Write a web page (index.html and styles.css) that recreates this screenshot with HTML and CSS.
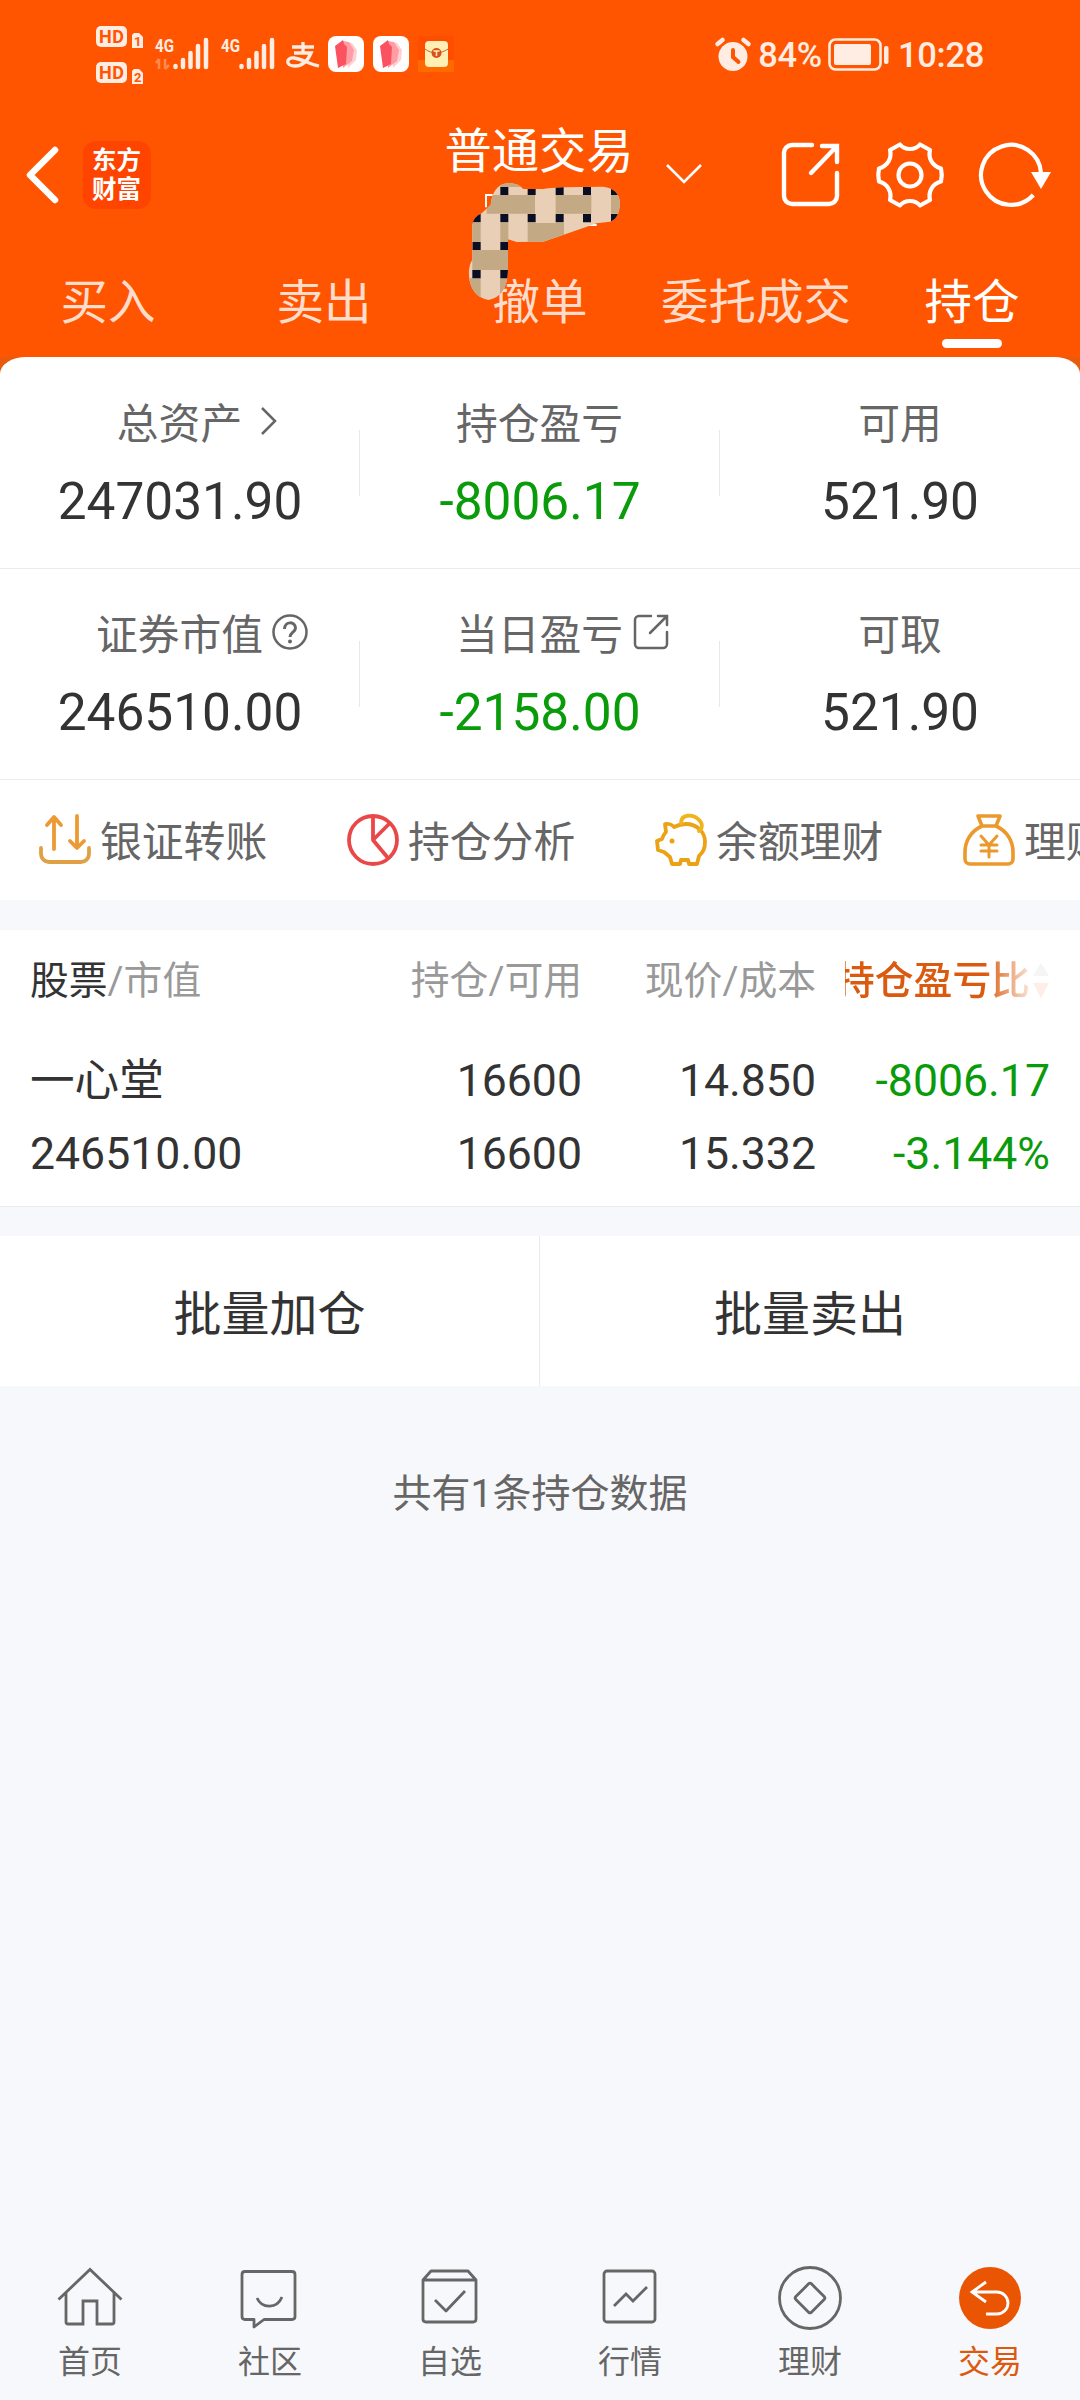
FILE: index.html
```html
<!DOCTYPE html>
<html lang="zh-CN">
<head>
  <meta charset="UTF-8">
  <title>普通交易 - 持仓</title>
  <link rel="stylesheet" href="styles.css">
</head>
<body>

  <header class="header">
    <div class="status-bar">
      <svg class="hd" width="48" height="60" viewBox="0 0 48 60">
        <g fill="#ffece2">
          <rect x="0" y="0" width="31" height="21" rx="5"/>
          <rect x="0" y="36" width="31" height="21" rx="5"/>
          <path d="M38 7h5l4 4v11H36V9z"/>
          <path d="M38 43h5l4 4v11H36V45z"/>
        </g>
        <g class="hd-text">
          <text x="3" y="17" font-size="18" textLength="25">HD</text>
          <text x="3" y="53" font-size="18" textLength="25">HD</text>
          <text x="38" y="20" font-size="13">1</text>
          <text x="38" y="56" font-size="13">2</text>
        </g>
      </svg>
      <svg class="signal" width="54" height="36" viewBox="0 0 54 36">
        <text class="net" x="0" y="14.500" font-size="19" textLength="19" lengthAdjust="spacingAndGlyphs">4G</text>
        <path d="M4 22v10M4 22l-3 4M10 32V22M10 32l4-4" stroke="#ffece2" stroke-width="2.500" fill="none" opacity=".35"/>
        <path d="M20.500 30v1M28 24v7M35.500 17v14M43 10v21M51 4v27" transform="translate(0 -1)" stroke="#ffece2" stroke-width="4.500" stroke-linecap="round"/>
      </svg>
      <svg class="signal" width="54" height="36" viewBox="0 0 54 36">
        <text class="net" x="0" y="14.500" font-size="19" textLength="19" lengthAdjust="spacingAndGlyphs">4G</text>
        <path d="M20.500 30v1M28 24v7M35.500 17v14M43 10v21M51 4v27" transform="translate(0 -1)" stroke="#ffece2" stroke-width="4.500" stroke-linecap="round"/>
      </svg>
      <svg class="pay" width="34" height="28" viewBox="0 0 34 28" fill="none" stroke="#ffece2" stroke-width="3">
        <path d="M6 6h22M17 1v11M8 12h17c-3 7-8 13-16 13-10 0-9-9-1-8 8 1 15 6 25 8" stroke-width="3.300"/>
      </svg>
      <svg class="app" width="36" height="36" viewBox="0 0 36 36">
        <rect width="36" height="36" rx="8" fill="#fff"/>
        <path d="M18 6l6 1 5 7-1 10-8 8z" fill="#ffd0d3"/>
        <path d="M15 5l6 1 5 8-2 11-9 7z" fill="#ff9da4"/>
        <path d="M7 10l8-6 1 4 3 3-1 17-8 4z" fill="#fb5260"/>
      </svg>
      <svg class="app" width="36" height="36" viewBox="0 0 36 36">
        <rect width="36" height="36" rx="8" fill="#fff"/>
        <path d="M18 6l6 1 5 7-1 10-8 8z" fill="#ffd0d3"/>
        <path d="M15 5l6 1 5 8-2 11-9 7z" fill="#ff9da4"/>
        <path d="M7 10l8-6 1 4 3 3-1 17-8 4z" fill="#fb5260"/>
      </svg>
      <svg class="app" width="36" height="36" viewBox="0 0 36 36">
        <rect width="36" height="36" fill="#ff4d00"/>
        <path d="M0 24h36v12H0z" fill="#ff6a00"/>
        <rect x="7" y="5" width="23" height="26" rx="4" fill="#ffefb5"/>
        <path d="M7 13c6 5 16 5 23 0" fill="none" stroke="#c9622a" stroke-width="1"/>
        <circle cx="18.500" cy="17" r="5" fill="#d9501c"/>
        <path d="M15.500 15h6M18.500 15v5" stroke="#ffefb5" stroke-width="1.500"/>
      </svg>

      <div class="status-right">
        <svg width="36" height="34" viewBox="0 0 36 34">
          <circle cx="18" cy="18.500" r="14.500" fill="#ffece2"/>
          <path d="M2.500 6l5-4M33.500 6l-5-4" stroke="#ffece2" stroke-width="4.500" stroke-linecap="round"/>
          <path d="M18 12v7l5.500 5" fill="none" stroke="#ff5500" stroke-width="4" stroke-linecap="round"/>
        </svg>
        <span class="percent">84%</span>
        <svg class="battery" width="62" height="34" viewBox="0 0 62 34">
          <rect x="1.500" y="1.500" width="51" height="30" rx="6" fill="none" stroke="#ffece2" stroke-width="2.600"/>
          <rect x="6" y="6" width="37" height="21" rx="2" fill="#ffece2"/>
          <rect x="56" y="8" width="4.500" height="18" rx="2" fill="#ffece2"/>
        </svg>
        <span>10:28</span>
      </div>
    </div>

    <div class="title-bar">
      <div class="title-left">
        <svg width="34" height="58" viewBox="0 0 34 58" fill="none" stroke="#fff" stroke-width="6.500" stroke-linecap="round" stroke-linejoin="round">
          <path d="M29 4L4 29l25 25"/>
        </svg>
        <div class="brand">东方<br>财富</div>
      </div>
      <h1 class="title">普通交易</h1>
      <svg class="title-arrow" width="36" height="22" viewBox="0 0 36 22" fill="none" stroke="#fff" stroke-width="2.600">
        <path d="M1 1l17 17L35 1"/>
      </svg>
      <div class="title-actions">
        <svg width="60" height="66" viewBox="0 0 60 66" fill="none" stroke="#fff" stroke-width="4.400" stroke-linecap="round">
          <path d="M31 3H11a8 8 0 0 0-8 8v43a8 8 0 0 0 8 8h37a8 8 0 0 0 8-8V31"/>
          <path d="M41 4h15v16M56 4L30 31"/>
        </svg>
        <svg width="68" height="66" viewBox="0 0 68 66" fill="none" stroke="#fff" stroke-width="4.200" stroke-linejoin="round">
          <path d="M24 2.500C29 8.500 39 8.500 44 2.500L54 8C52 16 56 24 65 26.500Q66.500 33 65 39.500C56 42 52 50 54 58L44 63.500C39 57.500 29 57.500 24 63.500L14 58C16 50 12 42 3 39.500Q1.500 33 3 26.500C12 24 16 16 14 8Z"/>
          <circle cx="34" cy="33" r="11.500"/>
        </svg>
        <svg width="72" height="66" viewBox="0 0 72 66" fill="none" stroke="#fff" stroke-width="4.200">
          <path d="M54.300 53A30 30 0 1 1 62 31"/>
          <path d="M52 30h20L62 47z" fill="#fff" stroke="none"/>
        </svg>
      </div>
    </div>

    <nav class="tabs">
      <a class="tab">买入</a>
      <a class="tab">卖出</a>
      <a class="tab">撤单</a>
      <a class="tab">委托成交</a>
      <a class="tab active">持仓</a>
    </nav>

    <!-- 账号遮挡涂抹 -->
    <svg class="doodle" width="300" height="240" viewBox="0 0 900 720">
      <defs>
        <clipPath id="smear">
          <path d="M157 345Q160 320 185 310L212 285Q218 223 265 219Q295 219 310 237L370 237Q400 230 550 230Q597 235 600 280Q597 328 570 335L530 340Q440 372 370 395L290 396L264 388L264 480Q262 560 205 570Q150 560 146 490Q148 460 157 450Z"/>
        </clipPath>
      </defs>
      <path d="M198 292V255H218M505 345h25" stroke="#fff" stroke-width="6" fill="none"/>
      <g clip-path="url(#smear)">
        <rect x="140" y="210" width="470" height="370" fill="#e9cfb6"/>
        <path fill="#c4a985" d="M200 255h145v56H200zM407 255h107v56H407zM573 255h30v56h-30zM323 339h109v57H323zM157 339h25v57h-25zM241 339h24v57h-24zM157 420h108v60H157zM140 505h42v70h-42zM240 505h30v70h-30zM241 215h60v16h-60z"/>
        <path fill="#0b0d22" d="M241 231h24v24h-24zM323 237h24v18h-24zM407 231h24v24h-24zM489 231h24v24h-24zM573 231h24v24h-24zM157 312h25v25h-25zM241 312h24v25h-24zM323 312h24v25h-24zM407 312h24v25h-24zM489 312h24v25h-24zM573 312h24v25h-24zM157 396h25v24h-25zM241 396h24v24h-24zM157 480h25v25h-25zM241 480h24v25h-24z"/>
      </g>
    </svg>
  </header>

  <section class="summary-wrap">
    <div class="summary">
      <div class="summary-row">
        <div class="cell">
          <div class="label">总资产
            <svg class="label-icon chevron" width="18" height="28" viewBox="0 0 18 28" fill="none" stroke="#666" stroke-width="2.500"><path d="M2 1l13 13L2 27"/></svg>
          </div>
          <div class="value">247031.90</div>
        </div>
        <div class="cell">
          <div class="label">持仓盈亏</div>
          <div class="value green">-8006.17</div>
        </div>
        <div class="cell">
          <div class="label">可用</div>
          <div class="value">521.90</div>
        </div>
      </div>
      <div class="summary-row">
        <div class="cell">
          <div class="label">证券市值
            <svg class="label-icon help" width="36" height="36" viewBox="0 0 36 36" fill="none" stroke="#666" stroke-width="2.500">
              <circle cx="18" cy="18" r="16.500"/>
              <path d="M12.500 15c0-8 11-8 11-1 0 4-5.500 4.500-5.500 9" stroke-width="3"/>
              <circle cx="18" cy="27.500" r="2" fill="#666" stroke="none"/>
            </svg>
          </div>
          <div class="value">246510.00</div>
        </div>
        <div class="cell">
          <div class="label">当日盈亏
            <svg class="label-icon share" width="36" height="36" viewBox="0 0 36 36" fill="none" stroke="#666" stroke-width="2.500" stroke-linecap="round">
              <path d="M18 2H6a4 4 0 0 0-4 4v24a4 4 0 0 0 4 4h24a4 4 0 0 0 4-4V18"/>
              <path d="M25 2h9v9M33 3L17 19"/>
            </svg>
          </div>
          <div class="value green">-2158.00</div>
        </div>
        <div class="cell">
          <div class="label">可取</div>
          <div class="value">521.90</div>
        </div>
      </div>
      <div class="links">
        <a class="link">
          <svg width="52" height="52" viewBox="0 0 52 52" fill="none" stroke="#ec9a33" stroke-width="3.800" stroke-linecap="round" stroke-linejoin="round">
            <path d="M15 35V4M8 11l7-8 7 8M38 2v31M31 27l7 7 7-7"/>
            <path d="M2 34v6a8 8 0 0 0 8 8h32a8 8 0 0 0 8-8v-6" stroke="#e0a046"/>
          </svg>
          <span>银证转账</span>
        </a>
        <a class="link">
          <svg width="52" height="52" viewBox="0 0 52 52" fill="none" stroke="#ea4848" stroke-width="3.800" stroke-linejoin="round">
            <circle cx="26" cy="26" r="24"/>
            <path d="M26 2v24L43 9M26 26l15 18"/>
          </svg>
          <span>持仓分析</span>
        </a>
        <a class="link">
          <svg width="52" height="52" viewBox="0 0 52 52" fill="none" stroke="#eba214" stroke-width="3.800" stroke-linejoin="round" stroke-linecap="round">
            <path d="M10 10c5-1 7 1 9 3 4-2 8-3 12-3 11 0 19 8 19 18 0 7-2 10-6 14l-2 8h-8l-1-4h-7l-1 4h-8l-2-7-6-5-6-2-1-9 5-2c1-3 2-5 4-7z"/>
            <path d="M26 9c0-9 12-9 17-4 5 4 5 9 1 12" stroke="#efb51e"/>
            <circle cx="17" cy="27" r="2.500" fill="#eba214" stroke="none"/>
          </svg>
          <span>余额理财</span>
        </a>
        <a class="link">
          <svg width="52" height="52" viewBox="0 0 52 52" fill="none" stroke="#eb992c" stroke-width="3.600" stroke-linejoin="round" stroke-linecap="round">
            <path d="M15 2h22l-4 10H19zM19 12C8 17 2 27 2 38v7a5 5 0 0 0 5 5h38a5 5 0 0 0 5-5v-7c0-11-6-21-17-26"/>
            <path d="M18 22l8 9 8-9M26 31v12M18 31h16M18 37h16" stroke-width="3"/>
          </svg>
          <span>理财</span>
        </a>
      </div>
    </div>
  </section>

  <section class="holdings">
    <div class="grid-row head">
      <span><b>股票</b>/市值</span>
      <span>持仓/可用</span>
      <span>现价/成本</span>
      <span class="sort">
        <em>持仓盈亏比</em>
        <svg width="18" height="36" viewBox="0 0 18 36"><path d="M9 0l8 13H1z" fill="#999"/><path d="M1 20h16L9 35z" fill="#ff5500"/></svg>
      </span>
    </div>
    <div class="grid-row stock">
      <span>一心堂</span>
      <span>16600</span>
      <span>14.850</span>
      <span class="green">-8006.17</span>
    </div>
    <div class="grid-row stock">
      <span>246510.00</span>
      <span>16600</span>
      <span>15.332</span>
      <span class="green">-3.144%</span>
    </div>
  </section>

  <section class="batch">
    <button class="batch-btn">批量加仓</button>
    <button class="batch-btn">批量卖出</button>
  </section>

  <p class="count">共有1条持仓数据</p>

  <footer class="bottom-nav">
    <a class="nav-item">
      <svg width="66" height="64" viewBox="0 0 66 64" fill="none" stroke="#666" stroke-width="2.800">
        <path d="M1.500 33.500L33 3.500l31.500 30M9 27v29q0 2 2 2h15V35h14v23h15q2 0 2-2V27"/>
      </svg>
      <span>首页</span>
    </a>
    <a class="nav-item">
      <svg width="64" height="64" viewBox="0 0 64 64" fill="none" stroke="#666" stroke-width="2.800" stroke-linejoin="round">
        <path d="M7 5.500h47q3 0 3 3v42q0 3-3 3H26L16 61v-7.500H7q-3 0-3-3v-42q0-3 3-3z"/>
        <path d="M19 32c5 11 20 11 25-1"/>
      </svg>
      <span>社区</span>
    </a>
    <a class="nav-item">
      <svg width="64" height="64" viewBox="0 0 64 64" fill="none" stroke="#666" stroke-width="2.800" stroke-linejoin="round">
        <path d="M5 14l8-9h37l8 9v39q0 3-3 3H8q-3 0-3-3zM5 14h53"/>
        <path d="M17 34l11 11 19-20"/>
      </svg>
      <span>自选</span>
    </a>
    <a class="nav-item">
      <svg width="64" height="64" viewBox="0 0 64 64" fill="none" stroke="#666" stroke-width="2.800">
        <rect x="6" y="5" width="51" height="51" rx="3"/>
        <path d="M16 40l12-12 7 7 14-14"/>
      </svg>
      <span>行情</span>
    </a>
    <a class="nav-item">
      <svg width="64" height="64" viewBox="0 0 64 64" fill="none" stroke="#666" stroke-width="2.800">
        <circle cx="32" cy="32" r="30.500"/>
        <rect x="21" y="21" width="22" height="22" rx="2" transform="rotate(45 32 32)"/>
      </svg>
      <span>理财</span>
    </a>
    <a class="nav-item current">
      <svg width="64" height="64" viewBox="0 0 64 64">
        <circle cx="32" cy="32" r="31" fill="#ea5504"/>
        <path d="M28 16L14 26l14 10M15 26h24a11 11 0 0 1 0 22H28" fill="none" stroke="#fff" stroke-width="2.800"/>
      </svg>
      <span>交易</span>
    </a>
  </footer>

</body>
</html>
```
FILE: styles.css
```css
* {
  box-sizing: border-box;
}

body {
  margin: 0;
  width: 1080px;
  height: 2400px;
  display: flex;
  flex-direction: column;
  background: #f7f8fb;
  color: #333;
  font-family: Roboto, "Noto Sans CJK SC", sans-serif;
  overflow: hidden;
}

svg {
  display: block;
  flex: none;
  overflow: visible;
}

.green {
  color: #0a9b0a;
}

/* 顶部 */
.header {
  position: relative;
  height: 357px;
  background: #ff5500;
  color: #fff;
}

.status-bar {
  display: flex;
  height: 110px;
  padding: 0 96px 0 96px;
  align-items: flex-start;
}

.hd {
  margin-top: 26px;
}

.hd-text,
.net {
  font-family: Roboto, sans-serif;
  font-weight: 700;
  fill: #ff5500;
}

.net {
  fill: #ffece2;
}

.signal {
  margin: 37px 0 0 11px;
}

.signal + .signal {
  margin-left: 12px;
}

.pay {
  margin: 41px 0 0 11px;
}

.app {
  margin: 36px 0 0 8px;
}

.app + .app {
  margin-left: 9px;
}

.status-right {
  display: flex;
  align-items: center;
  height: 34px;
  margin-top: 38px;
  margin-left: auto;
  font-size: 34.5px;
  font-weight: 500;
  letter-spacing: -0.3px;
  color: #ffece2;
}

.percent {
  margin: 0 6px 0 7px;
}

.battery {
  margin-right: 8px;
}

.title-bar {
  display: grid;
  grid-template-columns: 400px 278px 52px 1fr;
  height: 130px;
  align-items: center;
}

.title-left {
  display: flex;
  align-items: center;
  gap: 23px;
  padding-left: 26px;
}

.brand {
  width: 68px;
  height: 68px;
  padding: 5px 0 0 9px;
  border-radius: 13px;
  background: #ff4400;
  font-size: 24.5px;
  font-weight: 700;
  line-height: 29px;
}

.title {
  margin: -47px 0 0;
  font-size: 47.3px;
  line-height: 60px;
  font-weight: 400;
  text-align: center;
}

.title-arrow {
  margin-left: -12px;
}

.title-actions {
  display: flex;
  gap: 35px;
  padding-left: 51px;
}

.tabs {
  display: grid;
  grid-template-columns: repeat(5, 216px);
  height: 117px;
}

.tab {
  position: relative;
  padding-top: 28px;
  font-size: 47.5px;
  line-height: 70px;
  text-align: center;
  color: #ffdccb;
}

.tab.active {
  color: #fff;
}

.tab.active::after {
  content: "";
  position: absolute;
  left: 78px;
  bottom: 9px;
  width: 60px;
  height: 9px;
  border-radius: 5px;
  background: #fff;
}

.doodle {
  position: absolute;
  left: 420px;
  top: 110px;
}

/* 资产 */
.summary-wrap {
  background: linear-gradient(#e85a0c 30px, #fff 30px);
}

.summary {
  height: 543px;
  background: #fff;
  border-radius: 26px 26px 0 0 / 17px 17px 0 0;
  overflow: hidden;
}

.summary-row {
  display: grid;
  grid-template-columns: repeat(3, 360px);
  height: 212px;
  border-bottom: 1px solid #ebebeb;
}

.summary-row + .summary-row {
  height: 211px;
}

.cell {
  padding-top: 34px;
  text-align: center;
  background: linear-gradient(#e8e8e8, #e8e8e8) 359px 73px / 1px 66px no-repeat;
}

.summary-row + .summary-row .cell {
  padding-top: 33px;
  background-position: 359px 72px;
}

.cell:last-child {
  background: none;
}

.label {
  display: flex;
  justify-content: center;
  align-items: center;
  height: 60px;
  font-size: 41.8px;
  color: #666;
}

.cell:not(:last-child) .label {
  padding-right: 1px;
}

/* 图标不参与文字居中 */
.chevron {
  margin: 0 -36px 0 18px;
}

.help {
  margin: 0 -45px 0 9px;
}

.share {
  margin: 0 -46px 0 10px;
}

.value {
  margin-top: 21px;
  font-size: 51.4px;
  line-height: 60px;
}

.links {
  display: flex;
  gap: 79px;
  height: 120px;
  padding-left: 39px;
}

.link {
  display: flex;
  align-items: center;
  gap: 9px;
  flex: none;
  width: 229px;
  font-size: 41.8px;
  white-space: nowrap;
  color: #666;
}

.link span {
  margin-top: -2px;
}

/* 持仓列表 */
.holdings {
  height: 277px;
  margin-top: 30px;
  padding: 21px 30px 0;
  background: #fff;
  border-bottom: 1px solid #ececec;
}

.grid-row {
  display: grid;
  grid-template-columns: 317px 235px 234px 234px;
  text-align: right;
}

.grid-row span:first-child {
  text-align: left;
}

.head {
  height: 94px;
  font-size: 38.8px;
  line-height: 60px;
  color: #999;
}

.head b {
  font-weight: 400;
  color: #333;
}

.sort {
  display: flex;
  align-items: center;
  justify-content: flex-end;
  gap: 2px;
  height: 60px;
  width: 205px;
  margin-left: 29px;
  white-space: nowrap;
  overflow: hidden;
  mask-image: linear-gradient(90deg, #000 140px, rgba(0, 0, 0, 0.1) 188px);
}

.sort em {
  font-style: normal;
  font-weight: 500;
  color: #dc5a10;
}

.stock {
  height: 73px;
  font-size: 44.6px;
  line-height: 73px;
}

/* 批量操作 */
.batch {
  display: grid;
  grid-template-columns: 540px 540px;
  height: 150px;
  margin-top: 29px;
  background: #fff;
}

.batch-btn {
  border: none;
  padding: 0 0 2px;
  background: none;
  font-family: inherit;
  font-size: 48px;
  color: #333;
}

.batch-btn:first-child {
  border-right: 1px solid #ebebeb;
}

.count {
  margin: 78px 0 0;
  font-size: 39px;
  line-height: 60px;
  text-align: center;
  color: #666;
}

/* 底部导航 */
.bottom-nav {
  display: grid;
  grid-template-columns: repeat(6, 180px);
  height: 134px;
  margin-top: auto;
}

.nav-item {
  display: flex;
  flex-direction: column;
  align-items: center;
  gap: 12px;
  font-size: 32px;
  line-height: 40px;
  color: #666;
}

.nav-item.current {
  color: #dc5a10;
}
```
